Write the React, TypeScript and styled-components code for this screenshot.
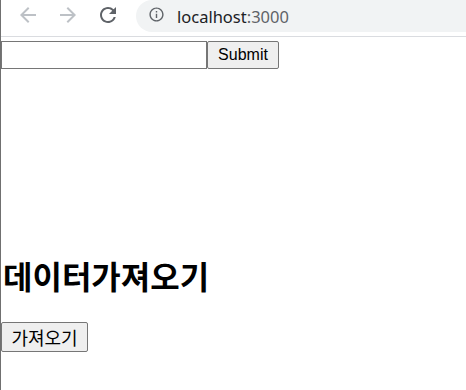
import React from "react";
import styled, { createGlobalStyle } from "styled-components";

const GlobalStyle = createGlobalStyle`
  html, body {
    margin: 0;
    padding: 0;
    background: #fff;
  }
  body {
    font-family: "Liberation Sans", Arial, sans-serif;
  }
`;

export const Window = styled.div`
  box-sizing: border-box;
  width: 466px;
  height: 390px;
  overflow: hidden;
  border-left: 1px solid #707070;
  background: #fff;
`;

export const Toolbar = styled.div`
  display: flex;
  align-items: flex-start;
  height: 36px;
  padding-left: 7px;
  border-bottom: 1px solid #dadce0;
  background: #fff;
`;

export const NavButton = styled.div<{ $dim?: boolean }>`
  display: flex;
  justify-content: center;
  width: 40px;
  padding-top: 3px;
  color: ${(p) => (p.$dim ? "#bdc1c6" : "#5f6368")};
`;

export const AddressBar = styled.div`
  flex: 1;
  display: flex;
  align-items: center;
  height: 32px;
  margin-left: 8px;
  padding-left: 12px;
  border-radius: 16px 0 0 16px;
  background: #f1f3f4;
  font: 400 16.5px "Noto Sans", Roboto, sans-serif;
  color: #202124;

  .port {
    color: #5f6368;
  }
`;

export const InfoIcon = styled.span`
  display: flex;
  margin-right: 12px;
  margin-top: -3px;
  color: #5f6368;
`;

export const Page = styled.div`
  padding-top: 4px;
`;

export const SearchForm = styled.form`
  display: flex;
  margin: 0;
`;

export const TextInput = styled.input`
  box-sizing: border-box;
  width: 206px;
  height: 28px;
  margin: 0;
  padding: 1px 3px;
  border: 1px solid #767676;
  font: 16px "Liberation Sans", Arial, sans-serif;
`;

export const PlainButton = styled.button<{ $w: number; $h: number; $size?: number }>`
  box-sizing: border-box;
  width: ${(p) => p.$w}px;
  height: ${(p) => p.$h}px;
  margin: 0;
  padding: 0;
  border: 1px solid #767676;
  border-radius: 2px;
  background: #efefef;
  color: #000;
  font: ${(p) => p.$size ?? 16}px "Liberation Sans", Arial, "Noto Sans CJK KR", sans-serif;
`;

export const Heading = styled.h1`
  margin: 184px 0 25px 2px;
  font: 700 32px/44px "Noto Sans CJK KR", sans-serif;
  color: #000;
`;

const ArrowBack = () => (
  <svg width="24" height="24" viewBox="0 0 24 24" fill="currentColor">
    <path d="M20 11H7.83l5.59-5.59L12 4l-8 8 8 8 1.41-1.41L7.83 13H20v-2z" />
  </svg>
);

const ArrowForward = () => (
  <svg width="24" height="24" viewBox="0 0 24 24" fill="currentColor">
    <path d="M12 4l-1.41 1.41L16.17 11H4v2h12.17l-5.58 5.59L12 20l8-8z" />
  </svg>
);

const Reload = () => (
  <svg width="24" height="24" viewBox="0 0 24 24" fill="currentColor">
    <path d="M17.65 6.35A7.958 7.958 0 0 0 12 4c-4.42 0-7.99 3.58-7.99 8s3.57 8 7.99 8c3.730 0 6.84-2.55 7.73-6h-2.08A5.99 5.99 0 0 1 12 18c-3.31 0-6-2.690-6-6s2.69-6 6-6c1.66 0 3.14.69 4.22 1.78L13 11h7V4l-2.35 2.35z" />
  </svg>
);

const Info = () => (
  <svg width="17" height="17" viewBox="0 0 24 24" fill="currentColor">
    <path d="M11 7h2v2h-2zm0 4h2v6h-2zm1-9C6.48 2 2 6.48 2 12s4.48 10 10 10 10-4.48 10-10S17.52 2 12 2zm0 18c-4.41 0-8-3.59-8-8s3.59-8 8-8 8 3.59 8 8-3.59 8-8 8z" />
  </svg>
);

export default function App() {
  return (
    <>
      <GlobalStyle />
      <Window>
        <Toolbar>
          <NavButton $dim>
            <ArrowBack />
          </NavButton>
          <NavButton $dim>
            <ArrowForward />
          </NavButton>
          <NavButton>
            <Reload />
          </NavButton>
          <AddressBar>
            <InfoIcon>
              <Info />
            </InfoIcon>
            localhost<span className="port">:3000</span>
          </AddressBar>
        </Toolbar>
        <Page>
          <SearchForm onSubmit={(e) => e.preventDefault()}>
            <TextInput type="text" />
            <PlainButton type="submit" $w={72} $h={28}>
              Submit
            </PlainButton>
          </SearchForm>
          <Heading>데이터가져오기</Heading>
          <PlainButton type="button" $w={87} $h={30} $size={18}>
            가져오기
          </PlainButton>
        </Page>
      </Window>
    </>
  );
}
